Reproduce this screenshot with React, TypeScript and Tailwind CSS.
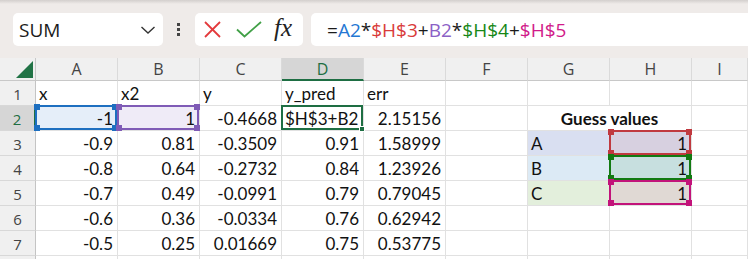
import React from "react";

type Ref = "blue" | "purple" | "green" | "red" | "dgreen" | "magenta";

function Corners({ c }: { c: string }) {
  return (
    <>
      <div className={`absolute -left-[3px] -top-[3px] w-[6px] h-[6px] ${c}`} />
      <div className={`absolute -right-[3px] -top-[3px] w-[6px] h-[6px] ${c}`} />
      <div className={`absolute -left-[3px] -bottom-[3px] w-[6px] h-[6px] ${c}`} />
      <div className={`absolute -right-[3px] -bottom-[3px] w-[6px] h-[6px] ${c}`} />
    </>
  );
}

function RefBox({ kind }: { kind: Ref }) {
  if (kind === "blue")
    return (
      <div className="absolute -left-[1px] -top-[1px] w-[calc(100%+1px)] h-[calc(100%+1px)] border-2 border-[#1d6fc0] z-10 pointer-events-none">
        <Corners c="bg-[#1d6fc0]" />
      </div>
    );
  if (kind === "purple")
    return (
      <div className="absolute -left-[1px] -top-[1px] w-[calc(100%+1px)] h-[calc(100%+1px)] border-2 border-[#7f5bb6] z-20 pointer-events-none">
        <Corners c="bg-[#7f5bb6]" />
      </div>
    );
  if (kind === "dgreen")
    return (
      <div className="absolute -left-[1px] -top-[1px] w-[calc(100%+1px)] h-[calc(100%+1px)] border-2 border-[#1e6e43] z-10 pointer-events-none">
        <div className="absolute -right-[4px] -bottom-[4px] w-[6px] h-[6px] bg-[#1e6e43] border border-white" />
      </div>
    );
  if (kind === "red")
    return (
      <div className="absolute -left-[1px] -top-[1px] w-[calc(100%+1px)] h-[calc(100%+1px)] border-2 border-[#c0393f] z-10 pointer-events-none">
        <Corners c="bg-[#c0393f]" />
      </div>
    );
  if (kind === "green")
    return (
      <div className="absolute -left-[1px] -top-[1px] w-[calc(100%+1px)] h-[calc(100%+1px)] border-2 border-[#127a12] z-20 pointer-events-none">
        <Corners c="bg-[#127a12]" />
      </div>
    );
  return (
    <div className="absolute -left-[1px] -top-[1px] w-[calc(100%+1px)] h-[calc(100%+1px)] border-2 border-[#c2137a] z-30 pointer-events-none">
      <Corners c="bg-[#c2137a]" />
    </div>
  );
}

type CellSpec = {
  t?: string;
  a?: "l" | "r" | "c";
  bg?: string;
  bold?: boolean;
  span?: boolean;
  ref?: Ref;
};

function Cell({ c }: { c: CellSpec }) {
  const align =
    c.a === "l" ? "justify-start pl-[3px]" : c.a === "c" ? "justify-center" : "justify-end pr-[4px]";
  return (
    <div
      className={`relative h-[25px] border-r border-b border-[#e1e1e1] flex items-start ${align} ${
        c.span ? "col-span-2" : ""
      } ${c.bg ?? "bg-white"}`}
    >
      {c.t !== undefined && (
        <span
          className={`font-[Lato] text-[17px] leading-[24px] pt-[1px] whitespace-nowrap text-[#111] ${
            c.bold ? "font-bold" : ""
          }`}
        >
          {c.t}
        </span>
      )}
      {c.ref && <RefBox kind={c.ref} />}
    </div>
  );
}

function RowHead({ n, active }: { n?: number; active?: boolean }) {
  return (
    <div
      className={`h-[25px] border-b border-[#d8d8d8] flex justify-center items-start ${
        active
          ? "bg-[#d6d6d6] border-r-2 border-r-[#1e6e43] text-[#1e6e43]"
          : "bg-[#f0f0f0] border-r border-r-[#c4c4c4] text-[#444]"
      }`}
    >
      {n !== undefined && (
        <span className="font-['Open_Sans'] text-[15px] leading-[24px] pt-[1px]">{n}</span>
      )}
    </div>
  );
}

function ColHead({ l, active }: { l: string; active?: boolean }) {
  return (
    <div
      className={`h-[23px] border-r border-[#dadada] flex justify-center items-center ${
        active
          ? "bg-[#d6d6d6] border-b-2 border-b-[#1e6e43] text-[#1e6e43]"
          : "bg-[#f0f0f0] border-b border-b-[#c8c8c8] text-[#444]"
      }`}
    >
      <span className="font-['Open_Sans'] text-[16px] leading-[20px]">{l}</span>
    </div>
  );
}

const rows: CellSpec[][] = [
  [
    { t: "x", a: "l" },
    { t: "x2", a: "l" },
    { t: "y", a: "l" },
    { t: "y_pred", a: "l" },
    { t: "err", a: "l" },
    {},
    {},
    {},
    {},
  ],
  [
    { t: "-1", bg: "bg-[#e5eef9]", ref: "blue" },
    { t: "1", bg: "bg-[#efebf7]", ref: "purple" },
    { t: "-0.4668" },
    { t: "$H$3+B2", a: "l", ref: "dgreen" },
    { t: "2.15156" },
    {},
    { t: "Guess values", a: "c", bold: true, span: true },
    {},
  ],
  [
    { t: "-0.9" },
    { t: "0.81" },
    { t: "-0.3509" },
    { t: "0.91" },
    { t: "1.58999" },
    {},
    { t: "A", a: "l", bg: "bg-[#d9dff1]" },
    { t: "1", bg: "bg-[#d7d0e0]", ref: "red" },
    {},
  ],
  [
    { t: "-0.8" },
    { t: "0.64" },
    { t: "-0.2732" },
    { t: "0.84" },
    { t: "1.23926" },
    {},
    { t: "B", a: "l", bg: "bg-[#dceaf5]" },
    { t: "1", bg: "bg-[#c7dfdf]", ref: "green" },
    {},
  ],
  [
    { t: "-0.7" },
    { t: "0.49" },
    { t: "-0.0991" },
    { t: "0.79" },
    { t: "0.79045" },
    {},
    { t: "C", a: "l", bg: "bg-[#e3efdc]" },
    { t: "1", bg: "bg-[#e0d9d4]", ref: "magenta" },
    {},
  ],
  [
    { t: "-0.6" },
    { t: "0.36" },
    { t: "-0.0334" },
    { t: "0.76" },
    { t: "0.62942" },
    {},
    {},
    {},
    {},
  ],
  [
    { t: "-0.5" },
    { t: "0.25" },
    { t: "0.01669" },
    { t: "0.75" },
    { t: "0.53775" },
    {},
    {},
    {},
    {},
  ],
  [{}, {}, {}, {}, {}, {}, {}, {}, {}],
];

export default function App() {
  return (
    <div className="w-[748px] h-[259px] overflow-hidden bg-white">
      {/* Formula bar area */}
      <div className="relative h-[58px] bg-[#efebe9]">
        <div className="absolute inset-x-0 top-0 h-[4px] bg-gradient-to-b from-[#d3cfcd] to-[#efebe9]" />
        <div className="flex items-start pt-[13px] pl-[13px]">
          <div className="w-[150px] h-[33px] bg-white rounded-[5px] flex items-center justify-between pl-[6px] pr-[7px] shrink-0">
            <span className="font-['Open_Sans'] text-[19px] leading-[24px] text-[#1b1b1b]">SUM</span>
            <svg width="16" height="10" viewBox="0 0 16 10">
              <polyline points="1.5,2 8,8 14.5,2" fill="none" stroke="#333" strokeWidth="1.4" />
            </svg>
          </div>
          <div className="ml-[11px] w-[8px] h-[33px] flex flex-col items-center justify-center gap-[2px] shrink-0">
            <div className="w-[3px] h-[3px] bg-[#444]" />
            <div className="w-[3px] h-[3px] bg-[#444]" />
            <div className="w-[3px] h-[3px] bg-[#444]" />
          </div>
          <div className="ml-[13px] w-[108px] h-[33px] bg-white rounded-[5px] flex items-center pl-[9px] shrink-0">
            <svg width="17" height="17" viewBox="0 0 17 17">
              <line x1="1" y1="1" x2="16" y2="16" stroke="#e3393c" strokeWidth="1.8" />
              <line x1="16" y1="1" x2="1" y2="16" stroke="#e3393c" strokeWidth="1.8" />
            </svg>
            <svg width="26" height="17" viewBox="0 0 26 17" className="ml-[15px]">
              <polyline points="1,8.5 8.5,15.5 25,1" fill="none" stroke="#41a047" strokeWidth="1.8" />
            </svg>
            <span className="ml-[12px] font-['Liberation_Serif'] italic text-[25px] leading-[28px] text-[#222] -mt-[3px]">
              fx
            </span>
          </div>
          <div className="ml-[8px] flex-1 h-[33px] bg-white rounded-l-[5px] flex items-center pl-[16px]">
            <span className="font-['Open_Sans'] text-[19px] leading-[24px] whitespace-nowrap text-[#1b1b1b]">
              =<span className="text-[#2477d3]">A2</span>*<span className="text-[#d93b3a]">$H$3</span>+
              <span className="text-[#8b61c6]">B2</span>*<span className="text-[#178817]">$H$4</span>+
              <span className="text-[#d11a8a]">$H$5</span>
            </span>
          </div>
        </div>
      </div>

      {/* Sheet grid */}
      <div className="grid grid-cols-[36px_repeat(8,82px)_1fr]">
        <div className="relative h-[23px] bg-[#f0f0f0] border-r border-b border-[#c8c8c8]">
          <svg width="36" height="23" viewBox="0 0 36 23" className="absolute left-0 top-0">
            <polygon points="16,20 33,20 33,3" fill="#217346" />
          </svg>
        </div>
        {["A", "B", "C", "D", "E", "F", "G", "H", "I"].map((l) => (
          <ColHead key={l} l={l} active={l === "D"} />
        ))}
        {rows.map((r, i) => (
          <React.Fragment key={i}>
            <RowHead n={i < 7 ? i + 1 : undefined} active={i === 1} />
            {r.map((c, j) => (
              <Cell key={j} c={c} />
            ))}
          </React.Fragment>
        ))}
      </div>
    </div>
  );
}
